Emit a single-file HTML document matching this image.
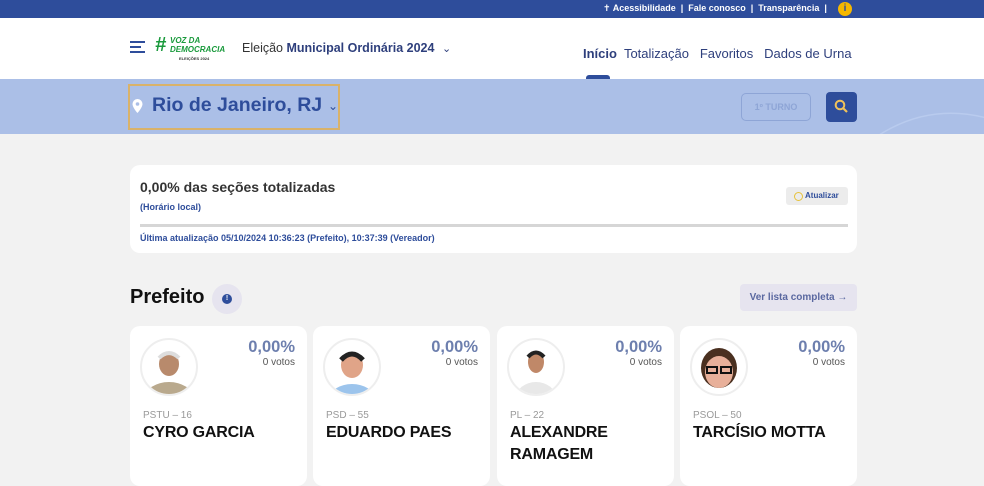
<!DOCTYPE html>
<html><head><meta charset="utf-8">
<style>
*{margin:0;padding:0;box-sizing:border-box}
body{width:984px;height:483px;overflow:hidden;background:#f2f2f2;font-family:"Liberation Sans","DejaVu Sans",sans-serif;position:relative}
.a{position:absolute}
.top{left:0;top:0;width:984px;height:18px;background:#2e4d9b;color:#fff;font-size:9px;font-weight:bold}
.hdr{left:0;top:18px;width:984px;height:61px;background:#fff}
.band{left:0;top:79px;width:984px;height:55px;background:#abbfe7;overflow:hidden}
.card{background:#fff;border-radius:10px}
.nm{font-size:16px;font-weight:bold;color:#111;line-height:22px;letter-spacing:-0.2px}
.pty{font-size:10px;color:#999}
.pct{font-size:16.5px;font-weight:bold;color:#6d7fae;text-align:right}
.vt{font-size:10px;color:#555;text-align:right}
.ph{width:58px;height:58px;border-radius:50%;border:2px solid #eee;overflow:hidden;background:#fff}
</style></head><body>
<div class="a top">
<span class="a" style="left:603px;top:3px;white-space:nowrap">✝ Acessibilidade &nbsp;|&nbsp; Fale conosco &nbsp;|&nbsp; Transparência &nbsp;|</span>
<span class="a" style="left:838px;top:2px;width:14px;height:14px;border-radius:50%;background:#f5b800;color:#2e4d9b;font-size:10px;text-align:center;line-height:14px">i</span>
</div>
<div class="a hdr">
<div class="a" style="left:130px;top:23px;width:15px;height:2px;background:#2e4d9b"></div>
<div class="a" style="left:130px;top:28px;width:11px;height:2px;background:#2e4d9b"></div>
<div class="a" style="left:130px;top:33px;width:15px;height:2px;background:#2e4d9b"></div>
<div class="a" style="left:155px;top:16px;color:#1a9a3c;font-weight:bold;font-style:italic;font-size:20px">#</div>
<div class="a" style="left:170px;top:18px;color:#1a9a3c;font-weight:bold;font-style:italic;font-size:8px;line-height:9px;white-space:nowrap">VOZ DA<br>DEMOCRACIA</div>
<div class="a" style="left:179px;top:38px;color:#333;font-size:4px;font-weight:bold;white-space:nowrap">ELEIÇÕES 2024</div>
<div class="a" style="left:242px;top:23px;font-size:12.5px;color:#333;white-space:nowrap">Eleição <b style="color:#2e3f7c">Municipal Ordinária 2024</b> <span style="font-size:11px;color:#2e3f7c;margin-left:4px">&#8964;</span></div>
<div class="a" style="left:583px;top:28px;font-size:13px;color:#2e3f7c;white-space:nowrap"><b>Início</b>&nbsp; Totalização&nbsp;&nbsp; Favoritos&nbsp;&nbsp; Dados de Urna</div>
<div class="a" style="left:586px;top:57px;width:24px;height:4px;background:#2e4d9b;border-radius:3px 3px 0 0"></div>
</div>
<div class="a band">
<svg class="a" style="left:860px;top:-20px" width="140" height="90"><path d="M0 90 Q60 40 130 60 Q150 20 120 0" stroke="#b9cbee" stroke-width="1.5" fill="none"/></svg>
<div class="a" style="left:128px;top:5px;width:212px;height:46px;border:2px solid #d9b26a"></div>
<svg class="a" style="left:132px;top:20px" width="11" height="14"><path d="M5.5 0a5 5 0 0 1 5 5c0 3.5-5 9-5 9s-5-5.5-5-9a5 5 0 0 1 5-5z" fill="#fff"/><circle cx="5.5" cy="5" r="1.8" fill="#abbfe7"/></svg>
<div class="a" style="left:152px;top:15px;font-size:19.5px;font-weight:bold;color:#2e4d9b;white-space:nowrap">Rio de Janeiro, RJ</div>
<div class="a" style="left:328px;top:20px;font-size:12px;color:#2e4d9b">&#8964;</div>
<div class="a" style="left:741px;top:14px;width:70px;height:28px;border:1px solid #8ea5d6;border-radius:5px;color:#8ea5d6;font-size:9px;font-weight:bold;text-align:center;line-height:26px">1º TURNO</div>
<div class="a" style="left:826px;top:13px;width:31px;height:30px;background:#2e4d9b;border-radius:4px"></div>
<svg class="a" style="left:834px;top:20px" width="15" height="15"><circle cx="6" cy="6" r="4.3" stroke="#f1c25a" stroke-width="2" fill="none"/><path d="M9 9l4 4" stroke="#f1c25a" stroke-width="2.2"/></svg>
</div>
<div class="a card" style="left:130px;top:165px;width:727px;height:88px">
<div class="a" style="left:10px;top:14px;font-size:14px;font-weight:bold;color:#333">0,00% das seções totalizadas</div>
<div class="a" style="left:10px;top:37px;font-size:9px;font-weight:bold;color:#2e4d9b">(Horário local)</div>
<div class="a" style="left:656px;top:22px;width:62px;height:18px;background:#ececec;border-radius:3px;font-size:8px;font-weight:bold;color:#2e4d9b;line-height:18px;padding-left:19px">Atualizar</div>
<div class="a" style="left:664px;top:27px;width:9px;height:9px;border:1.5px solid #e6c23a;border-radius:50%"></div>
<div class="a" style="left:10px;top:59px;width:708px;height:3px;background:#d6d6d6"></div>
<div class="a" style="left:10px;top:68px;font-size:9px;font-weight:bold;color:#2e4d9b">Última atualização 05/10/2024 10:36:23 (Prefeito), 10:37:39 (Vereador)</div>
</div>
<div class="a" style="left:130px;top:286px;font-size:20px;font-weight:bold;color:#111">Prefeito</div>
<div class="a" style="left:212px;top:284px;width:30px;height:30px;border-radius:50%;background:#e6e4ef"></div>
<div class="a" style="left:222px;top:294px;width:10px;height:10px;border-radius:50%;background:#2e4d9b;color:#fff;font-size:7px;text-align:center;line-height:10px;font-weight:bold">!</div>
<div class="a" style="left:740px;top:284px;width:117px;height:27px;background:#e6e4ef;border-radius:4px;font-size:10px;font-weight:bold;color:#5a68a0;line-height:27px;text-align:center">Ver lista completa &rarr;</div>

<div class="a card" style="left:130px;top:326px;width:177px;height:160px">
<div class="a ph" style="left:10px;top:12px"><svg width="54" height="54"><ellipse cx="27" cy="58" rx="24" ry="16" fill="#b9a98d"/><ellipse cx="27" cy="24" rx="10" ry="12" fill="#b88a6c"/><path d="M17 18q10-10 20 0" stroke="#ddd" stroke-width="4" fill="none"/></svg></div>
<div class="a pct" style="right:12px;top:12px">0,00%</div><div class="a vt" style="right:12px;top:31px">0 votos</div>
<div class="a pty" style="left:13px;top:84px">PSTU – 16</div>
<div class="a nm" style="left:13px;top:96px">CYRO GARCIA</div>
</div>
<div class="a card" style="left:313px;top:326px;width:177px;height:160px">
<div class="a ph" style="left:10px;top:12px"><svg width="54" height="54"><ellipse cx="27" cy="58" rx="22" ry="14" fill="#9cc4ec"/><ellipse cx="27" cy="25" rx="11" ry="13" fill="#e0a488"/><path d="M16 20q11-12 22 0" stroke="#222" stroke-width="5" fill="none"/></svg></div>
<div class="a pct" style="right:12px;top:12px">0,00%</div><div class="a vt" style="right:12px;top:31px">0 votos</div>
<div class="a pty" style="left:13px;top:84px">PSD – 55</div>
<div class="a nm" style="left:13px;top:96px">EDUARDO PAES</div>
</div>
<div class="a card" style="left:497px;top:326px;width:177px;height:160px">
<div class="a ph" style="left:10px;top:12px"><svg width="54" height="54"><ellipse cx="27" cy="58" rx="20" ry="16" fill="#e8e8e8"/><ellipse cx="27" cy="22" rx="8" ry="11" fill="#c08868"/><path d="M19 17q8-9 16 0" stroke="#222" stroke-width="4" fill="none"/></svg></div>
<div class="a pct" style="right:12px;top:12px">0,00%</div><div class="a vt" style="right:12px;top:31px">0 votos</div>
<div class="a pty" style="left:13px;top:84px">PL – 22</div>
<div class="a nm" style="left:13px;top:96px">ALEXANDRE<br>RAMAGEM</div>
</div>
<div class="a card" style="left:680px;top:326px;width:177px;height:160px">
<div class="a ph" style="left:10px;top:12px"><svg width="54" height="54"><ellipse cx="27" cy="28" rx="18" ry="20" fill="#4a3020"/><ellipse cx="27" cy="32" rx="14" ry="16" fill="#e8b09a"/><rect x="15" y="27" width="10" height="6" fill="none" stroke="#111" stroke-width="2"/><rect x="29" y="27" width="10" height="6" fill="none" stroke="#111" stroke-width="2"/></svg></div>
<div class="a pct" style="right:12px;top:12px">0,00%</div><div class="a vt" style="right:12px;top:31px">0 votos</div>
<div class="a pty" style="left:13px;top:84px">PSOL – 50</div>
<div class="a nm" style="left:13px;top:96px">TARCÍSIO MOTTA</div>
</div>
</body></html>
